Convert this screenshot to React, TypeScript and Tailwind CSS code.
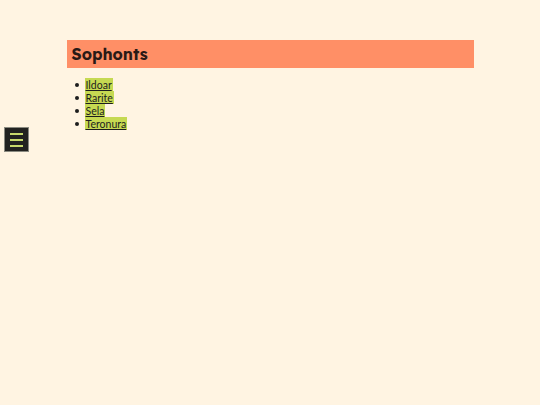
import React from "react";

export default function App() {
  const items = ["Ildoar", "Rarite", "Sela", "Teronura"];
  return (
    <div className="relative min-h-[405px] w-full bg-[#fff4e2]">
      <main className="mx-auto w-[407px] pt-[40px]">
        <h1
          className="h-[28px] bg-[#ff8f66] pl-[5px] text-[16px] font-bold leading-[28px] text-[#2a1a16]"
          style={{ fontFamily: "Lexend, Inter, 'Noto Sans', sans-serif" }}
        >
          Sophonts
        </h1>
        <ul
          className="mt-[10px] pl-[8px] text-[10.5px] text-[#1d1d1d]"
          style={{ fontFamily: "Lato, 'Noto Sans', sans-serif" }}
        >
          {items.map((t) => (
            <li key={t} className="flex h-[13px] items-center">
              <span className="mr-[6px] mt-[1px] block h-[4px] w-[4px] rounded-full bg-[#1d1d1d]" />
              <a
                href="#"
                className="block h-[13px] bg-[#c6d952] px-[1px] pt-[2px] leading-[11px] underline"
              >
                {t}
              </a>
            </li>
          ))}
        </ul>
      </main>
      <button className="absolute left-[4px] top-[127px] flex h-[25px] w-[25px] flex-col items-center justify-center gap-[4px] border border-[#8a8a80] bg-[#222220]">
        <span className="block h-[2px] w-[13px] bg-[#c8d96c]" />
        <span className="block h-[2px] w-[13px] bg-[#c8d96c]" />
        <span className="block h-[2px] w-[13px] bg-[#c8d96c]" />
      </button>
    </div>
  );
}
